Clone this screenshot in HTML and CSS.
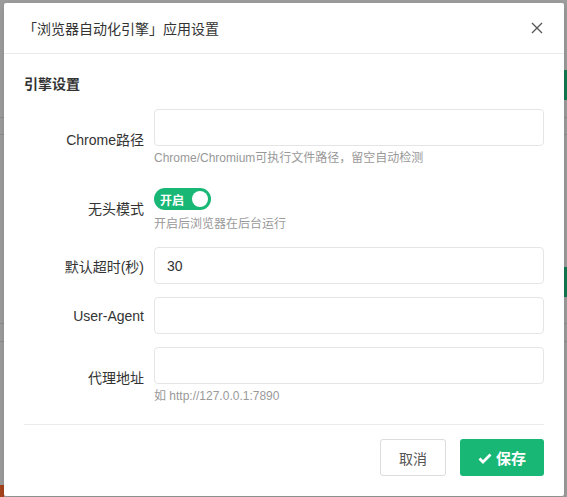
FILE: index.html
```html
<!DOCTYPE html>
<html lang="zh-CN">
<head>
    <meta charset="UTF-8">
    <meta name="viewport" content="width=device-width, initial-scale=1.0">
    <title>应用设置</title>
    <link rel="stylesheet" href="styles.css">
</head>
<body>
    <div class="backdrop">
        <div class="bg-line bg-line-1"></div>
        <div class="bg-line bg-line-2"></div>
        <div class="bg-line bg-line-3"></div>
        <div class="bg-line bg-line-4"></div>
        <div class="bg-green bg-green-1"></div>
        <div class="bg-green bg-green-2"></div>
        <div class="bg-orange"></div>
    </div>

    <div class="modal">
        <div class="modal-header">
            <span class="modal-title">「浏览器自动化引擎」应用设置</span>
            <span class="modal-close">
                <svg width="12" height="12" viewBox="0 0 12 12">
                    <path d="M1 1L11 11M11 1L1 11" stroke="#555" stroke-width="1.3" fill="none"/>
                </svg>
            </span>
        </div>
        <div class="modal-body">
            <h3 class="section-title">引擎设置</h3>

            <div class="form-row">
                <label class="form-label" for="chrome_path">Chrome路径</label>
                <div class="form-control">
                    <input type="text" id="chrome_path" class="text-input">
                    <div class="help-text">Chrome/Chromium可执行文件路径，留空自动检测</div>
                </div>
            </div>

            <div class="form-row">
                <label class="form-label">无头模式</label>
                <div class="form-control switch-control">
                    <span class="switch">
                        <span class="switch-text">开启</span>
                        <span class="switch-knob"></span>
                    </span>
                    <div class="help-text help-switch">开启后浏览器在后台运行</div>
                </div>
            </div>

            <div class="form-row">
                <label class="form-label" for="timeout">默认超时(秒)</label>
                <div class="form-control">
                    <input type="text" id="timeout" class="text-input" value="30">
                </div>
            </div>

            <div class="form-row">
                <label class="form-label" for="user_agent">User-Agent</label>
                <div class="form-control">
                    <input type="text" id="user_agent" class="text-input">
                </div>
            </div>

            <div class="form-row">
                <label class="form-label" for="proxy">代理地址</label>
                <div class="form-control">
                    <input type="text" id="proxy" class="text-input">
                    <div class="help-text">如 http://127.0.0.1:7890</div>
                </div>
            </div>

            <div class="modal-footer">
                <button class="btn btn-default">取消</button>
                <button class="btn btn-primary">
                    <svg width="14" height="12" viewBox="0 0 14 12">
                        <path d="M1.5 6.5L5 10L12.5 2.5" stroke="#fff" stroke-width="2.8" fill="none"/>
                    </svg>
                    保存
                </button>
            </div>
        </div>
    </div>
</body>
</html>
```

FILE: styles.css
```css
body {
    margin: 0;
    font-family: "Liberation Sans", "Noto Sans CJK SC", sans-serif;
    background-color: #9e9e9e;
    height: 497px;
    overflow: hidden;
}
.backdrop {
    position: absolute;
    inset: 0;
}
.bg-line {
    position: absolute;
    background-color: #8e8e8e;
}
.bg-line-1 { left: 0; width: 567px; top: 117px; height: 1px; }
.bg-line-2 { left: 0; width: 567px; top: 134px; height: 1px; }
.bg-line-3 { left: 0; width: 567px; top: 323px; height: 1px; }
.bg-line-4 { left: 0; width: 567px; top: 341px; height: 1px; }
.bg-green {
    position: absolute;
    right: 0;
    width: 3px;
    background-color: #137a50;
}
.bg-green-1 { top: 70px; height: 30px; }
.bg-green-2 { top: 267px; height: 30px; }
.bg-orange {
    position: absolute;
    left: 0;
    bottom: 0;
    width: 4px;
    height: 12px;
    background-color: #a8441c;
}
.modal {
    position: absolute;
    left: 4px;
    top: 3px;
    width: 560px;
    background-color: #fff;
    border-radius: 2px;
    box-shadow: 0 2px 8px rgba(0, 0, 0, 0.15);
}
.modal-header {
    height: 50px;
    padding: 0 20px;
    display: flex;
    align-items: center;
    justify-content: space-between;
    border-bottom: 1px solid #ebebeb;
}
.modal-title {
    font-size: 14px;
    color: #333;
    margin-left: -1px;
}
.modal-close {
    display: flex;
    margin-right: 1px;
}
.modal-body {
    padding: 19px 20px 20px;
}
.section-title {
    margin: 0 0 14px;
    font-size: 14px;
    line-height: 22px;
    font-weight: bold;
    color: #333;
}
.form-row {
    display: flex;
    align-items: center;
    margin-bottom: 13px;
}
.form-label {
    width: 120px;
    padding-right: 10px;
    text-align: right;
    font-size: 14px;
    color: #333;
    flex-shrink: 0;
}
.form-control {
    flex: 1;
}
.text-input {
    display: block;
    box-sizing: border-box;
    width: 100%;
    height: 37px;
    padding: 0 12px;
    border: 1px solid #e5e5e5;
    border-radius: 4px;
    font-family: inherit;
    font-size: 14px;
    color: #333;
    outline: none;
}
.help-text {
    margin-top: 2px;
    font-size: 12px;
    line-height: 20px;
    color: #999;
}
.switch-control {
    padding-top: 7px;
}
.help-switch {
    margin-top: 4px;
}
.switch {
    display: flex;
    align-items: center;
    justify-content: space-between;
    box-sizing: border-box;
    width: 57px;
    height: 22px;
    padding: 0 3px 0 6px;
    border-radius: 11px;
    background-color: #19b776;
}
.switch-text {
    font-size: 12px;
    font-weight: bold;
    color: #fff;
}
.switch-knob {
    width: 16px;
    height: 16px;
    border-radius: 50%;
    background-color: #fff;
}
.modal-footer {
    display: flex;
    justify-content: flex-end;
    gap: 14px;
    margin-top: 18px;
    padding-top: 14px;
    border-top: 1px solid #ebebeb;
}
.btn {
    display: flex;
    align-items: center;
    justify-content: center;
    gap: 4px;
    height: 37px;
    border-radius: 3px;
    font-family: inherit;
    font-size: 14px;
    cursor: pointer;
}
.btn-default {
    width: 66px;
    border: 1px solid #dcdcdc;
    background-color: #fff;
    color: #555;
}
.btn-primary {
    width: 84px;
    border: none;
    background-color: #19b776;
    color: #fff;
    font-size: 15px;
    font-weight: bold;
}
```
